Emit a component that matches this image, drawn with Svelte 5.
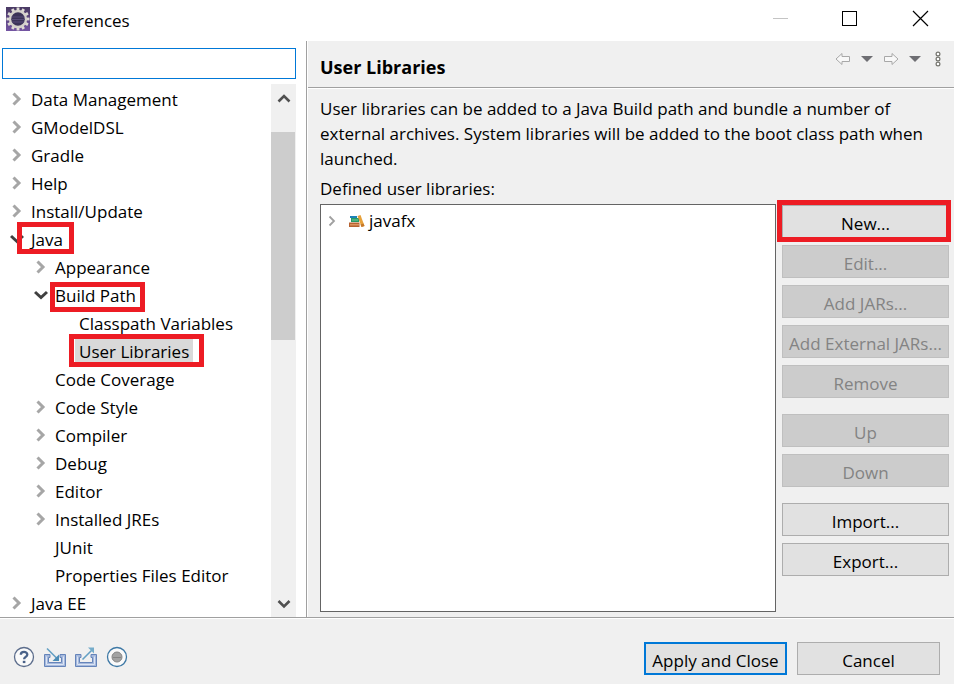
<script lang="ts">
	type Item = {
		label: string;
		level: number;
		state?: 'open' | 'closed';
		mark?: string;
		selected?: boolean;
	};

	const items: Item[] = [
		{ label: 'Data Management', level: 0, state: 'closed' },
		{ label: 'GModelDSL', level: 0, state: 'closed' },
		{ label: 'Gradle', level: 0, state: 'closed' },
		{ label: 'Help', level: 0, state: 'closed' },
		{ label: 'Install/Update', level: 0, state: 'closed' },
		{ label: 'Java', level: 0, state: 'open', mark: 'mark-java' },
		{ label: 'Appearance', level: 1, state: 'closed' },
		{ label: 'Build Path', level: 1, state: 'open', mark: 'mark-build' },
		{ label: 'Classpath Variables', level: 2 },
		{ label: 'User Libraries', level: 2, mark: 'mark-user', selected: true },
		{ label: 'Code Coverage', level: 1 },
		{ label: 'Code Style', level: 1, state: 'closed' },
		{ label: 'Compiler', level: 1, state: 'closed' },
		{ label: 'Debug', level: 1, state: 'closed' },
		{ label: 'Editor', level: 1, state: 'closed' },
		{ label: 'Installed JREs', level: 1, state: 'closed' },
		{ label: 'JUnit', level: 1 },
		{ label: 'Properties Files Editor', level: 1 },
		{ label: 'Java EE', level: 0, state: 'closed' }
	];

	const actions = [
		[
			{ label: 'New...', enabled: true, marked: true },
			{ label: 'Edit...' },
			{ label: 'Add JARs...' },
			{ label: 'Add External JARs...' },
			{ label: 'Remove' }
		],
		[{ label: 'Up' }, { label: 'Down' }],
		[
			{ label: 'Import...', enabled: true },
			{ label: 'Export...', enabled: true }
		]
	] as { label: string; enabled?: boolean; marked?: boolean }[][];

	let filter = $state('');
	// teeth of the gear in the title bar
	const teeth = Array.from({ length: 12 }, (_, i) => i * 30);
</script>

<div class="dialog">
	<header class="titlebar">
		<svg width="24" height="24" viewBox="0 0 24 24">
			<defs>
				<linearGradient id="app-bg" x1="0" y1="0" x2="0" y2="1">
					<stop offset="0" stop-color="#493a63" />
					<stop offset="1" stop-color="#7455a3" />
				</linearGradient>
			</defs>
			<rect width="24" height="24" fill="url(#app-bg)" />
			{#each teeth as angle}
				<rect x="10.6" y="0.5" width="2.8" height="4" fill="#dedbd4" transform="rotate({angle} 12 12)" />
			{/each}
			<circle cx="12" cy="12" r="8" fill="#3b3358" stroke="#d4d1cb" stroke-width="2.4" />
			<path d="M5.500 10h13M5 12.500h14M6 15h12" stroke="#574d78" stroke-width="1.200" />
		</svg>
		<span class="window-title">Preferences</span>
		<div class="window-buttons">
			<button aria-label="Minimize" disabled>
				<svg width="17" height="17"><path d="M1 8.500h15" stroke="#c4c4c4" /></svg>
			</button>
			<button aria-label="Maximize">
				<svg width="17" height="17"><rect x=".5" y="1.500" width="14" height="14" fill="none" stroke="#000" /></svg>
			</button>
			<button aria-label="Close">
				<svg width="17" height="17"><path d="M1 1l15 15M16 1L1 16" stroke="#000" stroke-width="1.200" /></svg>
			</button>
		</div>
	</header>

	<main class="body">
		<nav class="sidebar">
			<input class="filter" type="text" aria-label="Filter" bind:value={filter} />
			<div class="tree-wrap">
				<ul class="tree" role="tree">
					{#each items as item}
						<li
							class="row level-{item.level}"
							role="treeitem"
							aria-selected={!!item.selected}
							aria-expanded={item.state ? item.state === 'open' : undefined}
						>
							<span class="twisty">
								{#if item.state === 'open'}
									<svg width="14" height="14"><path d="M1 4l6 5.500L13 4" fill="none" stroke="#404040" stroke-width="3" /></svg>
								{:else if item.state === 'closed'}
									<svg width="14" height="14"><path d="M3.500 1.500L9 7l-5.500 5.500" fill="none" stroke="#a6a6a6" stroke-width="3" /></svg>
								{/if}
							</span>
							<span class="label" class:selected={item.selected}>
								{item.label}
								{#if item.mark}<span class="mark {item.mark}"></span>{/if}
							</span>
						</li>
					{/each}
				</ul>
				<div class="scrollbar">
					<button aria-label="Scroll up">
						<svg width="14" height="14"><path d="M1.500 10.500L7 5l5.500 5.500" fill="none" stroke="#505050" stroke-width="2.600" /></svg>
					</button>
					<div class="track"><div class="thumb"></div></div>
					<button aria-label="Scroll down">
						<svg width="14" height="14"><path d="M1.500 5L7 10.500 12.500 5" fill="none" stroke="#505050" stroke-width="2.600" /></svg>
					</button>
				</div>
			</div>
		</nav>

		<section class="page">
			<div class="page-head">
				<h1>User Libraries</h1>
				<div class="history">
					<button aria-label="Back" disabled>
						<svg width="16" height="14"><path d="M1 7l6-5.500v3h7.500v5H7v3z" fill="#f8f8f8" stroke="#a8a8a8" stroke-linejoin="round" /></svg>
					</button>
					<button aria-label="Back history">
						<svg width="12" height="14"><path d="M0 4h12l-6 6z" fill="#6e6e73" /></svg>
					</button>
					<button aria-label="Forward" disabled>
						<svg width="16" height="14"><path d="M15 7L9 1.500v3H1.500v5H9v3z" fill="#f8f8f8" stroke="#a8a8a8" stroke-linejoin="round" /></svg>
					</button>
					<button aria-label="Forward history">
						<svg width="12" height="14"><path d="M0 4h12l-6 6z" fill="#6e6e73" /></svg>
					</button>
					<button class="view-menu" aria-label="View menu">
						<svg width="6" height="16" fill="#fff" stroke="#75756f" stroke-width="1.200">
							<circle cx="3" cy="3" r="1.900" />
							<circle cx="3" cy="8" r="1.900" />
							<circle cx="3" cy="13" r="1.900" />
						</svg>
					</button>
				</div>
			</div>

			<div class="page-content">
				<p>
					User libraries can be added to a Java Build path and bundle a number of external archives.
					System libraries will be added to the boot class path when launched.
				</p>
				<div class="list-label" id="libs-label">Defined user libraries:</div>
				<div class="libs">
					<ul class="list" role="tree" aria-labelledby="libs-label">
						<li role="treeitem" aria-selected="false" aria-expanded="false">
							<svg width="8" height="12"><path d="M1.500 1.500L6 6l-4.500 4.500" fill="none" stroke="#a0a0a0" stroke-width="1.800" /></svg>
							<svg class="books" width="16" height="13">
								<path d="M1 1h7v2H1z" fill="#1d82b8" />
								<path d="M2 3h8v4H2z" fill="#259a67" />
								<path d="M3 4.500h6v1H3z" fill="#78c99b" />
								<path d="M0 7.500h10.500V12H0z" fill="#b66332" />
								<path d="M1 9h9v1.500H1z" fill="#dd945e" />
								<path d="M8.500 1l3-1L15.500 11l-3 1z" fill="#e7a13a" />
								<path d="M11.500 9.500l3-1 1 2.500-3 1z" fill="#c57828" />
							</svg>
							<span>javafx</span>
						</li>
					</ul>
					<div class="actions">
						{#each actions as group}
							<div class="group">
								{#each group as action}
									<div class="action">
										<button class="push" disabled={!action.enabled}>{action.label}</button>
										{#if action.marked}<span class="mark mark-new"></span>{/if}
									</div>
								{/each}
							</div>
						{/each}
					</div>
				</div>
			</div>
		</section>
	</main>

	<footer class="footer">
		<div class="tools">
			<button aria-label="Help">
				<svg width="22" height="22" fill="none">
					<circle cx="11" cy="11" r="9.500" fill="#fafafa" stroke="#5c6d8c" stroke-width="1.300" />
					<path d="M7.800 8.800C7.800 4.900 14.300 5 14.300 8.600c0 2.300-3.200 2.400-3.200 4.700" stroke="#4a6289" stroke-width="2.300" />
					<path d="M9.800 14.800h2.600v2.300H9.800z" fill="#4a6289" />
				</svg>
			</button>
			<button aria-label="Import preferences">
				<svg width="22" height="22" fill="none">
					<path d="M.5 8.500H6v3H4.500v5h13v-5H16v-3h5.500v12H.5z" fill="#a6b9dc" stroke="#6584ba" />
					<path d="M2.500 10.500v8h17v-8" stroke="#dce5f5" />
					<path d="M3 2.500L13.500 13" stroke="#64a0c4" stroke-width="1.600" />
					<path d="M15 8.500V15H8.500z" fill="#4a8bb5" />
				</svg>
			</button>
			<button aria-label="Export preferences">
				<svg width="22" height="22" fill="none">
					<path d="M.5 8.500H6v3H4.500v5h13v-5H16v-3h5.500v12H.5z" fill="#a6b9dc" stroke="#6584ba" />
					<path d="M2.500 10.500v8h17v-8" stroke="#dce5f5" />
					<path d="M7.500 13.500L17 4" stroke="#64a0c4" stroke-width="1.600" />
					<path d="M13 1.500h6v6z" fill="#75acca" />
				</svg>
			</button>
			<button aria-label="Record preferences">
				<svg width="22" height="22">
					<circle cx="11" cy="11" r="9.500" fill="#fafafa" stroke="#3d78a5" stroke-width="1.300" />
					<circle cx="11" cy="11" r="5" fill="#a3a3a3" stroke="#868686" />
					<path d="M7 11.500h8" stroke="#858585" />
				</svg>
			</button>
		</div>
		<button class="push wide primary">Apply and Close</button>
		<button class="push wide">Cancel</button>
	</footer>
</div>

<style>
	:global(body) {
		margin: 0;
	}

	.dialog {
		display: flex;
		flex-direction: column;
		min-height: 100vh;
		background: #f0f0f0;
		color: #000;
		font-family: 'Open Sans', 'Noto Sans CJK KR', sans-serif;
		font-size: 17px;
		line-height: 28px;
	}

	.dialog * {
		box-sizing: border-box;
	}

	svg {
		display: block;
		flex-shrink: 0;
	}

	button {
		padding: 0;
		border: none;
		background: none;
		color: inherit;
		font: inherit;
	}

	ul {
		margin: 0;
		padding: 0;
		list-style: none;
	}

	.titlebar {
		display: flex;
		align-items: center;
		height: 41px;
		padding: 0 25px 4px 6px;
		background: #fff;
	}

	.window-title {
		flex: 1;
		margin-left: 5px;
		padding-top: 4px;
	}

	.window-buttons {
		display: flex;
		gap: 53px;
	}

	.body {
		display: flex;
		flex: 1;
	}

	.sidebar {
		display: flex;
		flex-direction: column;
		flex: 0 0 307px;
		padding: 7px 10px 0 2px;
		border-right: 1px solid #a0a0a0;
		background: #fff;
	}

	.filter {
		width: 100%;
		height: 31px;
		margin-bottom: 5px;
		padding: 0 6px;
		border: 1px solid #0078d7;
		background: #fff;
		font: inherit;
		outline: none;
	}

	.tree-wrap {
		display: flex;
		flex: 1;
	}

	.tree {
		flex: 1;
		padding: 1px 0 0 8px;
	}

	.row {
		display: flex;
		height: 28px;
		line-height: 30px;
		white-space: nowrap;
	}

	.level-1 {
		padding-left: 24px;
	}

	.level-2 {
		padding-left: 48px;
	}

	.twisty {
		display: flex;
		align-items: center;
		width: 17px;
	}

	.label {
		position: relative;
		padding: 0 4px;
	}

	.selected {
		background: #d9d9d9;
	}

	/* red highlight frames lie over the rows */
	.mark {
		position: absolute;
		border: 5px solid #ed1c24;
		pointer-events: none;
	}

	.mark-java {
		inset: -3px -7px -1px -10px;
	}

	.mark-build {
		inset: 1px -5px -3px -1px;
	}

	.mark-user {
		inset: -3px -11px -2px -6px;
	}

	.mark-new {
		inset: -5px -2px -4px -5px;
	}

	.scrollbar {
		display: flex;
		flex-direction: column;
		width: 25px;
		background: #f0f0f0;
	}

	.scrollbar button {
		display: flex;
		align-items: center;
		justify-content: center;
		height: 28px;
	}

	.track {
		flex: 1;
		padding-top: 20px;
	}

	.thumb {
		width: 24px;
		height: 208px;
		background: #cdcdcd;
	}

	.page {
		display: flex;
		flex: 1;
		flex-direction: column;
		min-width: 0;
		border-left: 1px solid #fff;
	}

	.page-head {
		display: flex;
		justify-content: space-between;
		height: 47px;
		padding: 0 13px 0 12px;
		border-bottom: 1px solid #a0a0a0;
		box-shadow: 0 1px #fff;
	}

	h1 {
		margin: 0;
		padding-top: 12px;
		font-size: 18px;
		font-weight: 700;
	}

	.history {
		display: flex;
		align-items: center;
		gap: 10px;
		height: 36px;
	}

	.view-menu {
		margin-left: 4px;
	}

	.page-content {
		display: flex;
		flex: 1;
		flex-direction: column;
		padding: 8px 5px 5px 12px;
	}

	p {
		margin: 0;
		line-height: 25px;
	}

	.list-label {
		margin: 4px 0 1px;
	}

	.libs {
		display: flex;
		flex: 1;
		gap: 6px;
	}

	.list {
		flex: 1;
		padding: 2px 7px;
		border: 1px solid #646464;
		background: #fff;
	}

	.list li {
		display: flex;
		align-items: center;
	}

	.books {
		margin: 0 4px 0 13px;
	}

	.actions {
		display: flex;
		flex-direction: column;
		gap: 16px;
		width: 167px;
		padding-top: 1px;
	}

	.group {
		display: flex;
		flex-direction: column;
		gap: 7px;
	}

	.action {
		position: relative;
		display: flex;
	}

	.push {
		width: 100%;
		height: 33px;
		padding-top: 4px;
		border: 1px solid #adadad;
		background: #e1e1e1;
		white-space: nowrap;
	}

	.push:disabled {
		border-color: #bfbfbf;
		background: #ccc;
		color: #838383;
	}

	.footer {
		display: flex;
		align-items: center;
		gap: 10px;
		height: 67px;
		padding: 15px 14px 0 13px;
		border-top: 1px solid #a0a0a0;
		box-shadow: inset 0 1px #fff;
	}

	.tools {
		display: flex;
		flex: 1;
		gap: 9px;
		padding-bottom: 4px;
	}

	.wide {
		width: 143px;
	}

	.primary {
		border: 2px solid #0078d7;
		padding-top: 3px;
	}
</style>
